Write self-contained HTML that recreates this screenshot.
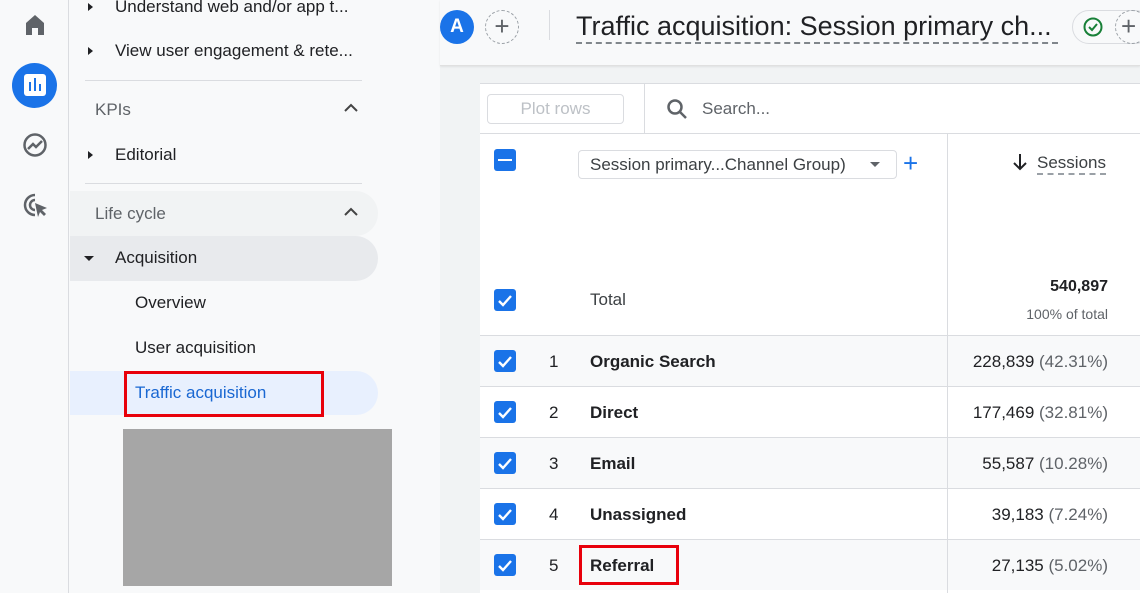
<!DOCTYPE html><html><head><style>
*{margin:0;padding:0;box-sizing:border-box}
body{width:1140px;height:593px;overflow:hidden;background:#f8f9fa;font-family:"Liberation Sans",sans-serif;position:relative;color:#202124}
.a{position:absolute}
.rail{left:0;top:0;width:69px;height:593px;background:#f8f9fa;border-right:1px solid #dadce0}
.side{left:70px;top:0;width:370px;height:593px;background:#f8f9fa}
.t{position:absolute;font-size:17px;white-space:nowrap}
.r{position:absolute;font-size:17px;white-space:nowrap;right:32px;text-align:right}
.tri{position:absolute;width:0;height:0;border-top:4px solid transparent;border-bottom:4px solid transparent;border-left:5px solid #202124}
.hr{position:absolute;left:85px;width:277px;height:1px;background:#dadce0}
.main{left:440px;top:66px;width:700px;height:527px;background:#f1f3f4}
.tbl{left:480px;top:83px;width:660px;height:510px;background:#fff;border-top:1px solid #dadce0}
.cb{position:absolute;width:22px;height:22px;background:#1a73e8;border-radius:3px}
.row{position:absolute;left:480px;width:660px;height:51px;border-top:1px solid #dadce0}
</style></head><body>
<div class="a rail"></div>
<svg class="a" style="left:23px;top:13px" width="24" height="24" viewBox="0 0 24 24"><path d="M3 10L12 2l9 8v12h-6v-7H9v7H3z" fill="#5f6368"/></svg>
<div class="a" style="left:12px;top:63px;width:45px;height:45px;border-radius:50%;background:#1a73e8"></div>
<div class="a" style="left:24px;top:74px;width:22px;height:22px;background:#fff;border-radius:3px"></div>
<div class="a" style="left:29px;top:82px;width:2px;height:9px;background:#1a73e8"></div>
<div class="a" style="left:34px;top:78px;width:2px;height:13px;background:#1a73e8"></div>
<div class="a" style="left:39px;top:84px;width:2px;height:7px;background:#1a73e8"></div>
<svg class="a" style="left:22px;top:132px" width="26" height="26" viewBox="0 0 26 26"><circle cx="13" cy="13" r="10.5" fill="none" stroke="#5f6368" stroke-width="2.5"/><path d="M6 17l5-5 3 3 6-6" fill="none" stroke="#5f6368" stroke-width="2.5"/></svg>
<svg class="a" style="left:22px;top:192px" width="28" height="28" viewBox="0 0 28 28"><path d="M13 3a10 10 0 1 0 0 20" fill="none" stroke="#5f6368" stroke-width="2.5"/><path d="M13 8a5 5 0 1 0 0 10" fill="none" stroke="#5f6368" stroke-width="2.5"/><path d="M13 11l12 5-5 2 4 4-2 2-4-4-2 5z" fill="#5f6368"/></svg>
<div class="a side"></div>
<div class="tri" style="left:88px;top:3px"></div><div class="t" style="left:115px;top:-3px">Understand web and/or app t...</div>
<div class="tri" style="left:88px;top:47px"></div><div class="t" style="left:115px;top:41px">View user engagement &amp; rete...</div>
<div class="hr" style="top:80px"></div>
<div class="t" style="left:95px;top:100px;color:#5f6368">KPIs</div>
<svg class="a" style="left:343px;top:102px" width="16" height="12"><path d="M2 9l6-6 6 6" fill="none" stroke="#444" stroke-width="2"/></svg>
<div class="tri" style="left:88px;top:151px"></div><div class="t" style="left:115px;top:145px">Editorial</div>
<div class="hr" style="top:183px"></div>
<div class="a" style="left:70px;top:191px;width:308px;height:45px;background:#f1f3f4;border-radius:0 23px 23px 0"></div>
<div class="t" style="left:95px;top:204px;color:#5f6368">Life cycle</div>
<svg class="a" style="left:343px;top:206px" width="16" height="12"><path d="M2 9l6-6 6 6" fill="none" stroke="#444" stroke-width="2"/></svg>
<div class="a" style="left:70px;top:236px;width:308px;height:45px;background:#e8eaed;border-radius:0 23px 23px 0"></div>
<div class="a" style="left:84px;top:256px;border-left:5px solid transparent;border-right:5px solid transparent;border-top:5px solid #202124"></div>
<div class="t" style="left:115px;top:248px">Acquisition</div>
<div class="t" style="left:135px;top:293px">Overview</div>
<div class="t" style="left:135px;top:338px">User acquisition</div>
<div class="a" style="left:70px;top:371px;width:308px;height:44px;background:#e8f0fe;border-radius:0 22px 22px 0"></div>
<div class="t" style="left:135px;top:383px;color:#1967d2">Traffic acquisition</div>
<div class="a" style="left:124px;top:371px;width:200px;height:46px;border:3px solid #e8000b"></div>
<div class="a" style="left:123px;top:429px;width:269px;height:157px;background:#a6a6a6"></div>
<div class="a main"></div>
<div class="a" style="left:440px;top:0;width:700px;height:66px;background:#f8f9fa;border-bottom:1px solid #e0e0e0;box-shadow:0 1px 2px rgba(0,0,0,.08)"></div>
<div class="a" style="left:440px;top:10px;width:34px;height:34px;border-radius:50%;background:#1a73e8;color:#fff;font-size:19px;font-weight:bold;text-align:center;line-height:34px">A</div>
<div class="a" style="left:485px;top:10px;width:34px;height:34px;border-radius:50%;border:1px dashed #9aa0a6;color:#5f6368;font-size:26px;text-align:center;line-height:31px">+</div>
<div class="a" style="left:549px;top:10px;width:1px;height:30px;background:#dadce0"></div>
<div class="t" style="left:576px;top:10px;font-size:27px;border-bottom:2px dashed #80868b;line-height:32px;width:482px;overflow:hidden">Traffic acquisition: Session primary ch...</div>
<div class="a" style="left:1072px;top:10px;width:80px;height:34px;border-radius:17px;border:1px solid #dadce0"></div>
<svg class="a" style="left:1083px;top:17px" width="20" height="20"><circle cx="10" cy="10" r="8.5" fill="none" stroke="#188038" stroke-width="2"/><path d="M6 10l3 3 5-6" fill="none" stroke="#188038" stroke-width="2"/></svg>
<div class="a" style="left:1115px;top:10px;width:34px;height:34px;border-radius:50%;border:1px dashed #9aa0a6;color:#5f6368;font-size:26px;line-height:31px;padding-left:5px">+</div>
<div class="a tbl"></div>
<div class="a" style="left:487px;top:94px;width:137px;height:30px;border:1px solid #dadce0;border-radius:4px;color:#bdc1c6;font-size:17px;text-align:center;line-height:28px">Plot rows</div>
<div class="a" style="left:644px;top:83px;width:1px;height:50px;background:#dadce0"></div>
<svg class="a" style="left:665px;top:97px" width="24" height="24"><circle cx="10" cy="10" r="6.5" fill="none" stroke="#5f6368" stroke-width="2.5"/><path d="M15 15l6 6" stroke="#5f6368" stroke-width="2.5"/></svg>
<div class="t" style="left:702px;top:99px;color:#5f6368;font-size:17px">Search...</div>
<div class="a" style="left:480px;top:133px;width:660px;height:1px;background:#dadce0"></div>
<div class="a" style="left:947px;top:134px;width:1px;height:459px;background:#dadce0"></div>
<div class="cb" style="left:494px;top:149px"></div><div class="a" style="left:498px;top:159px;width:14px;height:2px;background:#fff"></div>
<div class="a" style="left:578px;top:150px;width:319px;height:29px;border:1px solid #dadce0;border-radius:4px"></div>
<div class="t" style="left:590px;top:155px;font-size:17px;color:#3c4043">Session primary...Channel Group)</div>
<div class="a" style="left:870px;top:162px;border-left:5px solid transparent;border-right:5px solid transparent;border-top:5px solid #5f6368"></div>
<div class="t" style="left:903px;top:148px;font-size:26px;color:#1a73e8">+</div>
<svg class="a" style="left:1012px;top:152px" width="16" height="20"><path d="M8 2v15M2 11l6 6 6-6" fill="none" stroke="#202124" stroke-width="2"/></svg>
<div class="t" style="left:1037px;top:152px;font-size:17px;color:#3c4043;border-bottom:2px dashed #9aa0a6;line-height:21px">Sessions</div>
<div class="cb" style="left:494px;top:289px"></div>
<div class="t" style="left:590px;top:290px;color:#3c4043">Total</div>
<div class="r" style="top:278px;font-weight:bold;font-size:16px">540,897</div>
<div class="r" style="top:306px;font-size:14px;color:#5f6368">100% of total</div>

<div class="row" style="top:335px;background:#f8f9fa"></div>
<div class="row" style="top:386px"></div>
<div class="row" style="top:437px;background:#f8f9fa"></div>
<div class="row" style="top:488px"></div>
<div class="row" style="top:539px;background:#f8f9fa"></div>
<div class="a" style="left:947px;top:334px;width:1px;height:259px;background:#dadce0"></div>

<div class="cb" style="left:494px;top:350px"></div><div class="t" style="left:549px;top:352px">1</div><div class="t" style="left:590px;top:352px;font-weight:bold">Organic Search</div><div class="r" style="top:352px">228,839 <span style="color:#5f6368">(42.31%)</span></div>
<div class="cb" style="left:494px;top:401px"></div><div class="t" style="left:549px;top:403px">2</div><div class="t" style="left:590px;top:403px;font-weight:bold">Direct</div><div class="r" style="top:403px">177,469 <span style="color:#5f6368">(32.81%)</span></div>
<div class="cb" style="left:494px;top:452px"></div><div class="t" style="left:549px;top:454px">3</div><div class="t" style="left:590px;top:454px;font-weight:bold">Email</div><div class="r" style="top:454px">55,587 <span style="color:#5f6368">(10.28%)</span></div>
<div class="cb" style="left:494px;top:503px"></div><div class="t" style="left:549px;top:505px">4</div><div class="t" style="left:590px;top:505px;font-weight:bold">Unassigned</div><div class="r" style="top:505px">39,183 <span style="color:#5f6368">(7.24%)</span></div>
<div class="cb" style="left:494px;top:554px"></div><div class="t" style="left:549px;top:556px">5</div><div class="t" style="left:590px;top:556px;font-weight:bold">Referral</div><div class="r" style="top:556px">27,135 <span style="color:#5f6368">(5.02%)</span></div>
<div class="a" style="left:579px;top:545px;width:100px;height:40px;border:3px solid #e8000b"></div>
<svg class="a" style="left:0;top:0" width="1140" height="593">
<g fill="none" stroke="#fff" stroke-width="2.4">
<path d="M499 301l4 4 8-9"/><path d="M499 362l4 4 8-9"/><path d="M499 413l4 4 8-9"/><path d="M499 464l4 4 8-9"/><path d="M499 515l4 4 8-9"/><path d="M499 566l4 4 8-9"/>
</g></svg>
</body></html>
